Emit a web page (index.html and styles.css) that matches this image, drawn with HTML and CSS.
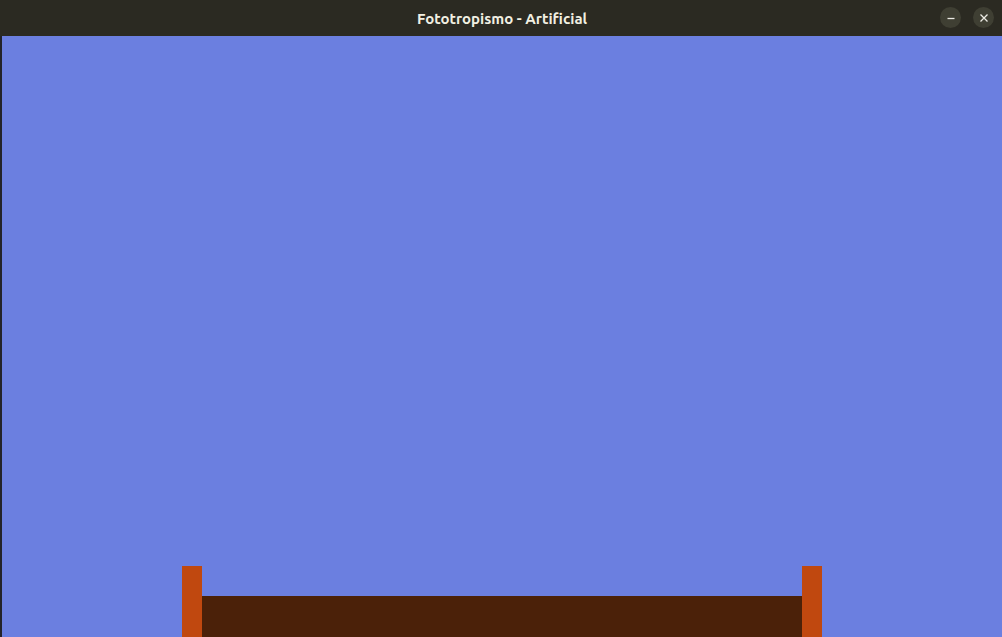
FILE: index.html
```html
<!DOCTYPE html>
<html>
<head>
<meta charset="utf-8">
<link rel="stylesheet" href="styles.css">
</head>
<body>
<div class="window">
  <header class="titlebar">
    <div class="title">Fototropismo - Artificial</div>
    <div class="controls">
      <span class="btn"><svg width="10" height="10" viewBox="0 0 10 10"><path d="M1.5 5.5h7" stroke="#ecebe4" stroke-width="1.3"/></svg></span>
      <span class="btn"><svg width="10" height="10" viewBox="0 0 10 10"><path d="M1.5 1.5l7 7M8.5 1.5l-7 7" stroke="#ecebe4" stroke-width="1.3"/></svg></span>
    </div>
  </header>
  <main class="scene">
    <div class="pot">
      <div class="post"></div>
      <div class="soil"></div>
      <div class="post"></div>
    </div>
  </main>
</div>
</body>
</html>
```
FILE: styles.css
```css
html, body { margin: 0; padding: 0; }
body { width: 1002px; height: 637px; overflow: hidden; background: #2c2c24; }
.window { display: flex; flex-direction: column; height: 637px; }
.titlebar {
  height: 36px; flex: none; background: #2b2a22;
  display: flex; align-items: center; justify-content: center; position: relative;
}
.title {
  font-family: Ubuntu, "Open Sans", "DejaVu Sans", sans-serif; font-weight: 700;
  font-size: 15px; color: #f2f0e2; padding-left: 2px;
}
.controls { position: absolute; right: 8px; top: 7px; display: flex; gap: 12px; }
.btn {
  width: 21px; height: 21px; border-radius: 50%; background: #3f3f33;
  display: flex; align-items: center; justify-content: center;
}
.scene {
  flex: 1; background: #6b7fe0; border-left: 2px solid #23232a;
  display: flex; flex-direction: column; justify-content: flex-end;
}
.pot { display: flex; align-items: flex-end; margin-left: 180px; }
.post { width: 20px; height: 71px; background: #c0480f; }
.soil { width: 600px; height: 41px; background: #4b2109; }
```
